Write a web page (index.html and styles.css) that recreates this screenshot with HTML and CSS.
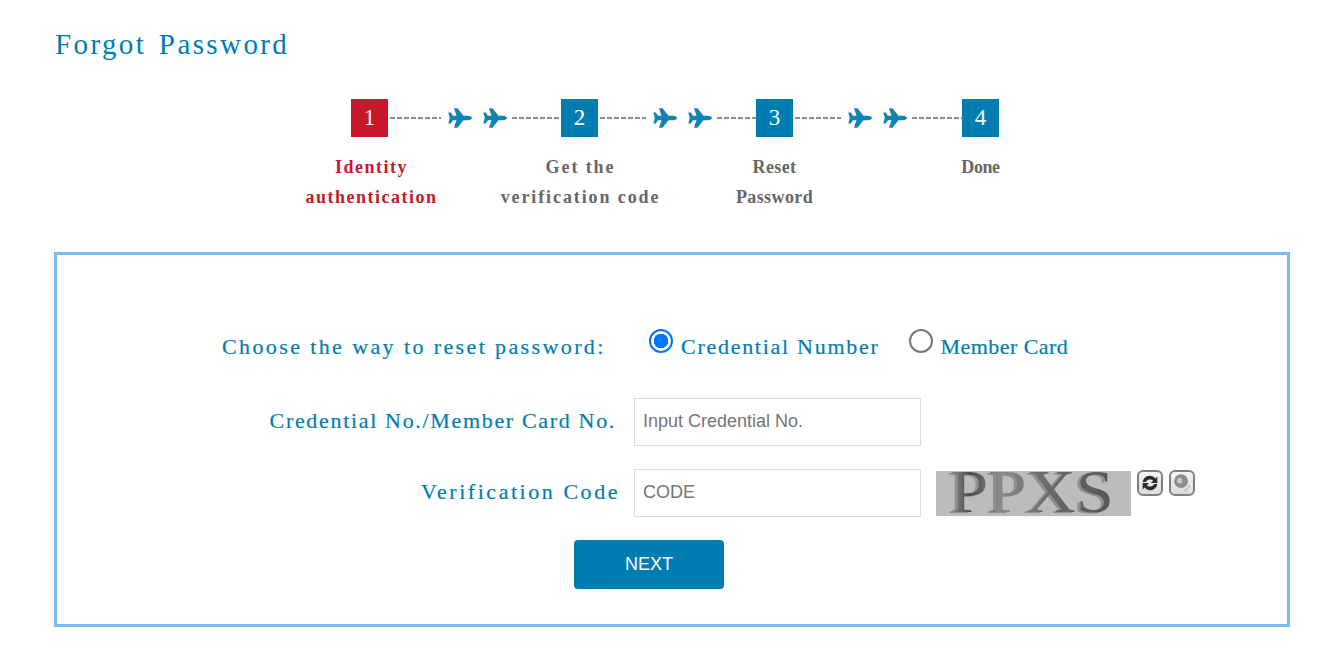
FILE: index.html
```html
<!DOCTYPE html>
<html lang="en">
<head>
    <meta charset="UTF-8">
    <title>Forgot Password</title>
    <link rel="stylesheet" href="styles.css">
</head>
<body>
    <svg class="icon-defs" width="0" height="0">
        <symbol id="plane" viewBox="0 0 24 20">
            <path d="M24 10c0-1.200-1.800-2.300-4-2.300h-4.500L9.500.3H6l2.500 7.400H5L2.800 4.500H.3L1.800 10 .3 15.500h2.500L5 12.300h3.500L6 19.700h3.500l6-7.400H20c2.200 0 4-1.100 4-2.300z"/>
        </symbol>
        <linearGradient id="captchaFill" x1="0" y1="0" x2="1" y2="0">
            <stop offset="0" stop-color="#8f8f8f"/>
            <stop offset="0.12" stop-color="#4a4a4a"/>
            <stop offset="0.3" stop-color="#8a8a8a"/>
            <stop offset="0.6" stop-color="#6a6a6a"/>
            <stop offset="1" stop-color="#555555"/>
        </linearGradient>
        <filter id="captchaShade" x="-5%" y="-5%" width="110%" height="110%">
            <feDropShadow dx="-3" dy="1" stdDeviation="0.6" flood-color="#8f8f8f"/>
        </filter>
    </svg>

    <main class="page">
        <h1 class="title">Forgot Password</h1>

        <!-- Steps -->
        <div class="steps">
            <div class="step step-active">
                <div class="step-num">1</div>
                <div class="step-label label-first">Identity<br>authentication</div>
            </div>
            <div class="connector connector-a">
                <span class="dash"></span>
                <svg class="plane"><use href="#plane"/></svg>
                <svg class="plane"><use href="#plane"/></svg>
                <span class="dash"></span>
            </div>
            <div class="step">
                <div class="step-num">2</div>
                <div class="step-label label-second">Get the<br>verification code</div>
            </div>
            <div class="connector connector-b">
                <span class="dash"></span>
                <svg class="plane"><use href="#plane"/></svg>
                <svg class="plane"><use href="#plane"/></svg>
                <span class="dash"></span>
            </div>
            <div class="step">
                <div class="step-num">3</div>
                <div class="step-label label-third">Reset<br>Password</div>
            </div>
            <div class="connector connector-c">
                <span class="dash"></span>
                <svg class="plane"><use href="#plane"/></svg>
                <svg class="plane"><use href="#plane"/></svg>
                <span class="dash"></span>
            </div>
            <div class="step">
                <div class="step-num">4</div>
                <div class="step-label label-fourth">Done</div>
            </div>
        </div>

        <!-- Form -->
        <form class="form-box">
            <div class="way-row">
                <span class="way-title">Choose the way to reset password:</span>
                <label class="way-option way-first">
                    <input type="radio" name="way" checked>
                    <span>Credential Number</span>
                </label>
                <label class="way-option way-second">
                    <input type="radio" name="way">
                    <span>Member Card</span>
                </label>
            </div>

            <div class="field-row">
                <label class="field-label label-card">Credential No./Member Card No.</label>
                <input class="field-input" type="text" placeholder="Input Credential No.">
            </div>

            <div class="field-row field-code">
                <label class="field-label label-code">Verification Code</label>
                <input class="field-input" type="text" placeholder="CODE">
                <svg class="captcha" viewBox="0 0 195 45" role="img">
                    <rect width="195" height="45" fill="#bcbcbc"/>
                    <text class="captcha-text" x="14" y="41" textLength="164" lengthAdjust="spacingAndGlyphs">PPXS</text>
                </svg>
                <button class="mini-btn" type="button" aria-label="Refresh">
                    <svg viewBox="0 0 24 24" width="22" height="22">
                        <path class="ic-dark" d="M4 11a8 8 0 0 1 14-4l2-2v7h-7l2.500-2.500A5 5 0 0 0 7.500 11z"/>
                        <path class="ic-dark" d="M20 13a8 8 0 0 1-14 4l-2 2v-7h7l-2.500 2.500a5 5 0 0 0 8-1.500z"/>
                    </svg>
                </button>
                <button class="mini-btn" type="button" aria-label="Audio">
                    <svg viewBox="0 0 24 24" width="22" height="22">
                        <circle cx="11" cy="10" r="7.500" fill="#8d8d8d"/>
                        <circle cx="9.500" cy="9.500" r="3" fill="#c8c8c8"/>
                        <path d="M13 21l7-7 1.500 1.500L16 22z" fill="#bcd2bc"/>
                    </svg>
                </button>
            </div>

            <div class="form-actions">
                <button class="next-btn" type="button">NEXT</button>
            </div>
        </form>
    </main>
</body>
</html>
```

FILE: styles.css
```css
:root {
    --blue: #007db0;
    --red: #c9182b;
    --gray-text: #666666;
    --box-border: #7dbcee;
    --input-border: #dddddd;
}

* {
    margin: 0;
    padding: 0;
    box-sizing: border-box;
}

body {
    font-family: "Liberation Serif", "DejaVu Serif", serif;
    background: #ffffff;
    color: var(--blue);
}

.icon-defs {
    position: absolute;
}

.page {
    padding: 0 34px 0 54px;
}

.title {
    font-size: 29px;
    font-weight: 400;
    letter-spacing: 2.4px;
    word-spacing: 3px;
    line-height: 30px;
    padding: 29px 0 0 1px;
}

/* Steps */
.steps {
    display: flex;
    margin: 40px 0 0 297px;
    height: 114px;
}

.step {
    width: 37px;
    display: flex;
    flex-direction: column;
    align-items: center;
}

.step-num {
    width: 37px;
    height: 38px;
    flex: none;
    background: var(--blue);
    color: #ffffff;
    font-size: 23px;
    line-height: 38px;
    text-align: center;
}

.step-label {
    margin-top: 15px;
    white-space: nowrap;
    text-align: center;
    font-size: 18px;
    font-weight: 700;
    letter-spacing: 1.1px;
    line-height: 30px;
    color: var(--gray-text);
}

.label-first {
    letter-spacing: 1.5px;
    padding-left: 4px;
}

.label-second {
    letter-spacing: 1.9px;
    padding-left: 2px;
}

.label-third {
    letter-spacing: 0.4px;
}

.label-fourth {
    letter-spacing: -0.4px;
}

.step-active .step-num {
    background: var(--red);
}

.step-active .step-label {
    color: var(--red);
}

.connector {
    height: 38px;
    display: flex;
    align-items: center;
    padding-left: 2px;
}

.dash {
    flex: 1;
    height: 2px;
    background: repeating-linear-gradient(to right, #8c8c8c 0 5px, transparent 5px 7px);
}

.connector-a {
    width: 173px;
}

.connector-b {
    width: 158px;
}

.connector-c {
    width: 169px;
}

.connector-a .dash:first-child {
    flex: none;
    width: 51px;
}

.connector-b .dash:first-child,
.connector-c .dash:first-child {
    flex: none;
    width: 46px;
}

.plane {
    width: 24px;
    height: 20px;
    flex: none;
    margin-left: 7px;
    fill: #0f83b4;
}

.plane + .plane {
    margin-left: 11px;
    margin-right: 5px;
}

/* Form */
.form-box {
    margin-top: 39px;
    height: 375px;
    border: 3px solid var(--box-border);
}

.way-row {
    display: flex;
    align-items: center;
    height: 28px;
    margin-top: 78px;
    padding-left: 165px;
    font-size: 22px;
    -webkit-text-stroke: 0.2px var(--blue);
}

.way-row span {
    white-space: nowrap;
}

.way-title {
    width: 427px;
    letter-spacing: 2.39px;
}

.way-option {
    display: flex;
    align-items: center;
    gap: 7px;
    letter-spacing: 1.72px;
}

.way-first {
    gap: 8px;
    margin-right: 30px;
}

.way-option input {
    appearance: none;
    width: 24px;
    height: 24px;
    flex: none;
    border: 2px solid #767676;
    border-radius: 50%;
    background: #ffffff;
    position: relative;
    top: -6px;
}

.way-option input:checked {
    border-color: #0075ff;
    background: radial-gradient(circle, #0075ff 0 7px, #ffffff 7.5px);
}

.way-second {
    letter-spacing: 0.45px;
}

.field-row {
    display: flex;
    align-items: flex-start;
    margin-top: 37px;
    height: 48px;
}

.field-code {
    margin-top: 23px;
}

.field-label {
    text-align: right;
    white-space: nowrap;
    font-size: 22px;
    letter-spacing: 1.67px;
    line-height: 45px;
    -webkit-text-stroke: 0.2px var(--blue);
}

.label-card {
    width: 559px;
    margin-right: 18px;
}

.label-code {
    width: 563px;
    margin-right: 14px;
    letter-spacing: 2.54px;
}

.field-input {
    width: 287px;
    height: 48px;
    border: 1px solid var(--input-border);
    padding: 0 8px 1px;
    font-family: "Liberation Sans", sans-serif;
    font-size: 18px;
    color: #333333;
    outline: none;
}

.field-input::placeholder {
    color: #757575;
}

.captcha {
    width: 195px;
    height: 45px;
    margin: 2px 0 0 15px;
    flex: none;
    overflow: visible;
}

.captcha-text {
    font-family: "Liberation Serif", serif;
    font-size: 62px;
    fill: url(#captchaFill);
    filter: url(#captchaShade);
}

.mini-btn {
    width: 26px;
    height: 26px;
    margin: 1px 0 0 6px;
    flex: none;
    display: flex;
    align-items: center;
    justify-content: center;
    background: linear-gradient(#f4f4f4, #dcdcdc);
    border: 2px solid #808080;
    border-radius: 6px;
}

.ic-dark {
    fill: #2c2c2c;
}

.form-actions {
    margin-top: 23px;
    padding-left: 517px;
}

.next-btn {
    width: 150px;
    height: 49px;
    border: none;
    border-radius: 4px;
    background: var(--blue);
    color: #ffffff;
    font-family: "Liberation Sans", sans-serif;
    font-size: 18px;
}
```
